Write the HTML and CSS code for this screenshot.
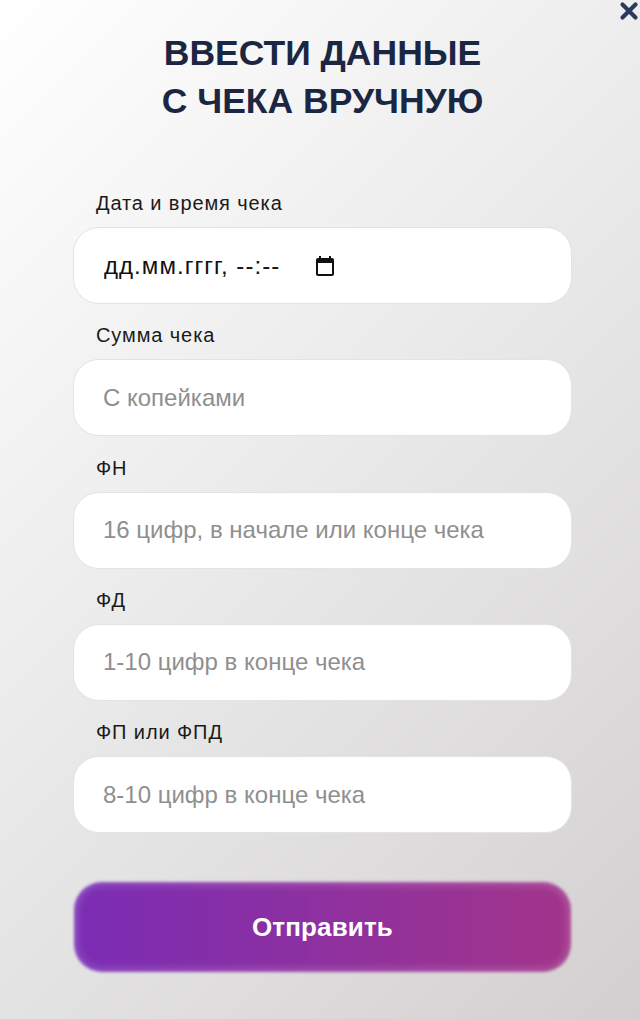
FILE: index.html
```
<!DOCTYPE html>
<html lang="ru">
<head>
<meta charset="utf-8">
<title>Ввести данные с чека вручную</title>
<link rel="stylesheet" href="styles.css">
</head>
<body>
<main class="modal">
  <button class="close" type="button" aria-label="Закрыть">
    <svg viewBox="0 0 20 20" width="20" height="20"><path d="M3.5 3.5L16.5 16.5M16.5 3.5L3.5 16.5" fill="none" stroke="#2b3a5c" stroke-width="4.2" stroke-linecap="round"/></svg>
  </button>
  <h1 class="title">ВВЕСТИ ДАННЫЕ<br>С ЧЕКА ВРУЧНУЮ</h1>
  <form class="form">
    <div class="field">
      <label class="label">Дата и время чека</label>
      <div class="input input-date">
        <span class="date-text">дд.мм.гггг, --:--</span>
        <svg class="cal" viewBox="0 0 24 24" width="24" height="24"><path d="M19 4h-1V2h-2v2H8V2H6v2H5c-1.1 0-2 .9-2 2v14c0 1.1.9 2 2 2h14c1.1 0 2-.9 2-2V6c0-1.1-.9-2-2-2zm0 16H5V9h14v11z" fill="#111"/></svg>
      </div>
    </div>
    <div class="field">
      <label class="label">Сумма чека</label>
      <input class="input" type="text" placeholder="С копейками">
    </div>
    <div class="field">
      <label class="label">ФН</label>
      <input class="input" type="text" placeholder="16 цифр, в начале или конце чека">
    </div>
    <div class="field">
      <label class="label">ФД</label>
      <input class="input" type="text" placeholder="1-10 цифр в конце чека">
    </div>
    <div class="field">
      <label class="label">ФП или ФПД</label>
      <input class="input" type="text" placeholder="8-10 цифр в конце чека">
    </div>
    <button class="submit" type="button"><span class="submit-text">Отправить</span></button>
  </form>
</main>
</body>
</html>
```
FILE: styles.css
```
* { box-sizing: border-box; }
html, body { margin: 0; height: 100%; }
body {
  font-family: "Liberation Sans", Arial, sans-serif;
  background: linear-gradient(135deg, #ffffff 0%, #eeeeee 38%, #e4e3e3 61%, #d3cfd0 100%);
  overflow: hidden;
}
.modal {
  position: relative;
  height: 1019px;
  padding: 30px 68px 0 73px;
}
.close {
  position: absolute;
  top: 1px;
  right: 1px;
  width: 20px;
  height: 20px;
  padding: 0;
  border: 0;
  background: none;
}
.close svg { display: block; }
.title {
  margin: 0;
  font-size: 35.5px;
  line-height: 47.5px;
  font-weight: 700;
  text-align: center;
  color: #1b2742;
}
.form {
  display: flex;
  flex-direction: column;
  margin-top: 66px;
}
.field {
  display: flex;
  flex-direction: column;
  margin-bottom: 19.3px;
}
.label {
  height: 36px;
  padding-left: 23px;
  font-size: 20px;
  line-height: 24px;
  letter-spacing: 0.9px;
  color: #1a1a1a;
}
.input {
  display: block;
  width: 100%;
  height: 77px;
  padding: 0 29px;
  border: 1px solid #e3e3e3;
  border-radius: 26px;
  background: #fff;
  font-family: inherit;
  font-size: 24px;
  color: #111;
  outline: none;
}
.input::placeholder { color: #8f8f8f; opacity: 1; }
.input-date {
  display: flex;
  align-items: center;
  padding-left: 30px;
}
.date-text {
  width: 209px;
  font-size: 24px;
  letter-spacing: 1.05px;
  white-space: nowrap;
  color: #111;
}
.cal { flex: none; }
.submit {
  position: relative;
  height: 92px;
  margin-top: 29px;
  padding: 0;
  border: 0;
  background: none;
  font-family: inherit;
  font-size: 26px;
  font-weight: 700;
  letter-spacing: 0.15px;
  color: #fff;
}
.submit::before {
  content: "";
  position: absolute;
  inset: 1px;
  border-radius: 28px;
  background: linear-gradient(90deg, #7a2cb4 0%, #a1348a 100%);
  box-shadow: inset 0 0 8px 3px rgba(255, 255, 255, 0.2);
  filter: blur(1.5px);
}
.submit-text { position: relative; }
```
